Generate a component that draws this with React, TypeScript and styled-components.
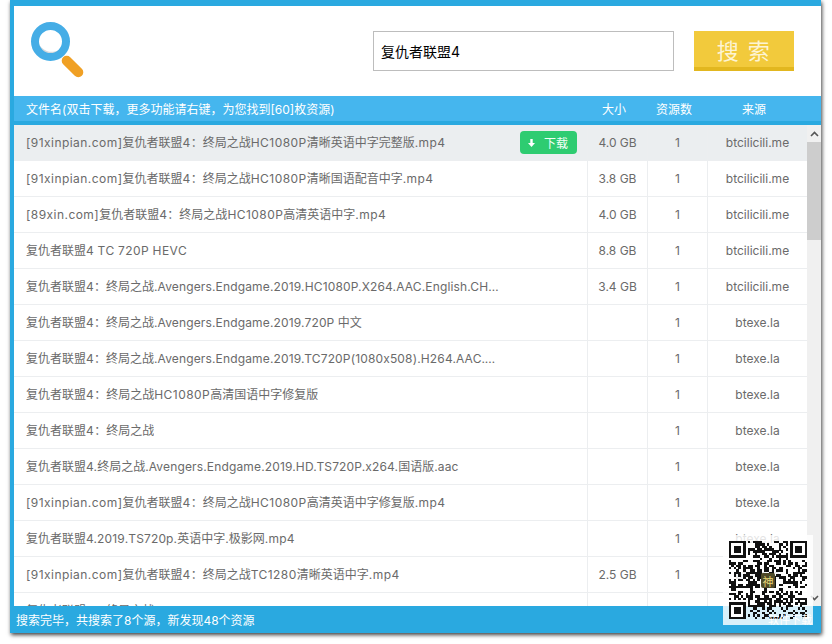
import React from 'react';
import styled, { createGlobalStyle } from 'styled-components';

const GlobalStyle = createGlobalStyle`
  html, body {
    margin: 0;
    padding: 0;
    background: #fff;
  }
  body {
    font-family: Inter, "Noto Sans CJK SC", sans-serif;
  }
`;

const Page = styled.div`
  width: 832px;
  height: 644px;
  padding: 0 10px 11px;
  box-sizing: border-box;
  overflow: hidden;
`;

const Win = styled.div`
  position: relative;
  width: 811px;
  height: 633px;
  box-sizing: border-box;
  display: flex;
  flex-direction: column;
  background: #fff;
  border-top: 6px solid #2aa9e0;
  border-left: 4px solid #2aa9e0;
  box-shadow: 1px 2px 4px rgba(0, 0, 0, 0.75);
`;

const Header = styled.div`
  height: 90px;
  box-sizing: border-box;
  flex: none;
  display: flex;
  align-items: flex-start;
  padding: 16px 27px 0 16px;
`;

const SearchInput = styled.input`
  width: 301px;
  height: 40px;
  box-sizing: border-box;
  margin: 9px 0 0 287px;
  padding: 0 7px;
  border: 1px solid #bdbdbd;
  outline: none;
  font-family: inherit;
  font-size: 14px;
  color: #000;
`;

const SearchButton = styled.button`
  width: 100px;
  height: 40px;
  box-sizing: border-box;
  margin: 9px 0 0 20px;
  padding: 0;
  border: 0;
  border-bottom: 4px solid #e2b71f;
  background: #f2ca3c;
  color: #fdf4d4;
  font-family: inherit;
  font-size: 22px;
  letter-spacing: 1.5px;
`;

const HeadRow = styled.div`
  height: 29px;
  box-sizing: border-box;
  flex: none;
  display: flex;
  align-items: center;
  padding-right: 17px;
  background: #45b6ee;
  border-bottom: 4px solid #2aa9e0;
  color: #fff;
  font-size: 12px;
`;

const HeadName = styled.div`
  flex: 1;
  padding-left: 12px;
`;

const HeadCell = styled.div<{ $w: number }>`
  width: ${p => p.$w}px;
  text-align: center;
`;

const Body = styled.div`
  flex: 1;
  min-height: 0;
  display: flex;
  overflow: hidden;
`;

const List = styled.div`
  flex: 1;
  min-width: 0;
`;

const Row = styled.div<{ $active?: boolean }>`
  height: 36px;
  box-sizing: border-box;
  display: flex;
  align-items: stretch;
  border-bottom: 1px solid #eceef0;
  background: ${p => (p.$active ? '#ebeef0' : '#fff')};
  color: #6a6a6a;
  font-size: 12px;
`;

const NameCell = styled.div`
  flex: 1;
  min-width: 0;
  display: flex;
  align-items: center;
  justify-content: space-between;
  padding: 0 10px 0 12px;
`;

const NameText = styled.span`
  max-width: 476px;
  padding-bottom: 2px;
  overflow: hidden;
  white-space: nowrap;
  text-overflow: ellipsis;
`;

const Latin = styled.span<{ $tight?: boolean }>`
  letter-spacing: ${p => (p.$tight ? '0.15px' : '0.45px')};
`;

const Cell = styled.div<{ $w: number }>`
  width: ${p => p.$w}px;
  flex: none;
  display: flex;
  align-items: center;
  justify-content: center;
  border-left: 1px solid #eceef0;
  box-sizing: border-box;
`;

const DownloadBtn = styled.span`
  flex: none;
  width: 57px;
  height: 23px;
  box-sizing: border-box;
  padding-left: 7px;
  display: flex;
  align-items: center;
  gap: 8px;
  border-radius: 4px;
  background: #2ecc71;
  color: #f2fff7;
  font-size: 12px;
`;

const Scrollbar = styled.div`
  width: 14px;
  flex: none;
  display: flex;
  flex-direction: column;
  background: #f0f0f0;
`;

const ScrollArrow = styled.div`
  height: 17px;
  flex: none;
  display: flex;
  align-items: center;
  justify-content: center;
`;

const ScrollTrack = styled.div`
  flex: 1;
`;

const ScrollThumb = styled.div`
  height: 98px;
  background: #cdcdcd;
`;

const Footer = styled.div`
  height: 27px;
  flex: none;
  margin-left: -4px;
  padding-left: 6px;
  display: flex;
  align-items: center;
  background: #2aa9e0;
  color: #fff;
  font-size: 12px;
`;

const QrBox = styled.div`
  position: absolute;
  right: 8px;
  bottom: 8px;
  width: 90px;
  height: 90px;
  display: flex;
  justify-content: center;
  padding-top: 6px;
  box-sizing: border-box;
  background: rgba(255, 255, 255, 0.82);

  svg {
    filter: blur(0.5px);
  }
`;

const QrBadge = styled.span`
  position: absolute;
  left: 38px;
  top: 38px;
  width: 14px;
  height: 15px;
  display: flex;
  align-items: center;
  justify-content: center;
  border-radius: 2px;
  background: #4e4a28;
  color: #e9d776;
  font-size: 11px;
`;

const QrCaption = styled.span`
  position: absolute;
  right: 1px;
  bottom: -1px;
  color: #fff;
  font-size: 11px;
  line-height: 12px;
`;

const Logo = () => (
  <svg width="56" height="64" viewBox="0 0 56 64">
    <circle cx="20.5" cy="19.5" r="12" fill="#fff" />
    <path d="M9 21a11.5 11.5 0 0 0 20 7a13 11 0 0 1-20-7z" fill="#d5d8db" />
    <circle cx="20.5" cy="19.5" r="15.5" fill="none" stroke="#45ade6" strokeWidth="8" />
    <path d="M36.7 38.7L48.3 50.3" fill="none" stroke="#f0a024" strokeWidth="10" strokeLinecap="round" />
  </svg>
);

const DownArrow = () => (
  <svg width="9" height="10" viewBox="0 0 9 10">
    <path d="M3.3 1h2.4v4h2.3L4.5 9 1 5h2.3z" fill="#fff" />
  </svg>
);

const Chevron = ({ up }: { up?: boolean }) => (
  <svg width="9" height="6" viewBox="0 0 9 6">
    <path d={up ? 'M1 5l3.5-3.5L8 5' : 'M1 1l3.5 3.5L8 1'} fill="none" stroke="#555" strokeWidth="1.6" />
  </svg>
);

const QR_SIZE = 33;

const isFinder = (x: number, y: number) =>
  (x < 8 && y < 8) || (x >= QR_SIZE - 8 && y < 8) || (x < 8 && y >= QR_SIZE - 8);

const QrCode = () => {
  const cells: React.ReactNode[] = [];
  let seed = 7319;
  for (let y = 0; y < QR_SIZE; y++) {
    for (let x = 0; x < QR_SIZE; x++) {
      seed = (seed * 1103515245 + 12345) & 0x7fffffff;
      if (isFinder(x, y) || ((seed >> 16) & 3) >= 2) continue;
      cells.push(<rect key={x + '-' + y} x={x} y={y} width="1.02" height="1.02" />);
    }
  }
  const finder = (x: number, y: number) => (
    <g key={x + '-' + y}>
      <rect x={x} y={y} width="7" height="7" />
      <rect x={x + 1} y={y + 1} width="5" height="5" fill="#fff" />
      <rect x={x + 2} y={y + 2} width="3" height="3" />
    </g>
  );
  return (
    <svg width="78" height="78" viewBox={`0 0 ${QR_SIZE} ${QR_SIZE}`} fill="#111" shapeRendering="crispEdges">
      {cells}
      {finder(0, 0)}
      {finder(QR_SIZE - 7, 0)}
      {finder(0, QR_SIZE - 7)}
    </svg>
  );
};

// latin runs sit wider than the CJK ones in the original font, dotted names less so
const spaced = (text: string, tight?: boolean) =>
  text.split(/([\x21-\x7e]+)/).map((part, i) =>
    i % 2 ? (
      <Latin key={i} $tight={tight}>
        {part}
      </Latin>
    ) : (
      part
    ),
  );

const rows = [
  { name: '[91xinpian.com]复仇者联盟4：终局之战HC1080P清晰英语中字完整版.mp4', size: '4.0 GB', src: 'btcilicili.me' },
  { name: '[91xinpian.com]复仇者联盟4：终局之战HC1080P清晰国语配音中字.mp4', size: '3.8 GB', src: 'btcilicili.me' },
  { name: '[89xin.com]复仇者联盟4：终局之战HC1080P高清英语中字.mp4', size: '4.0 GB', src: 'btcilicili.me' },
  { name: '复仇者联盟4 TC 720P HEVC', size: '8.8 GB', src: 'btcilicili.me' },
  { name: '复仇者联盟4：终局之战.Avengers.Endgame.2019.HC1080P.X264.AAC.English.CHS.mp4', size: '3.4 GB', src: 'btcilicili.me', tight: true },
  { name: '复仇者联盟4：终局之战.Avengers.Endgame.2019.720P 中文', size: '', src: 'btexe.la', tight: true },
  { name: '复仇者联盟4：终局之战.Avengers.Endgame.2019.TC720P(1080x508).H264.AAC.CHS.mp4', size: '', src: 'btexe.la', tight: true },
  { name: '复仇者联盟4：终局之战HC1080P高清国语中字修复版', size: '', src: 'btexe.la' },
  { name: '复仇者联盟4：终局之战', size: '', src: 'btexe.la' },
  { name: '复仇者联盟4.终局之战.Avengers.Endgame.2019.HD.TS720P.x264.国语版.aac', size: '', src: 'btexe.la', tight: true },
  { name: '[91xinpian.com]复仇者联盟4：终局之战HC1080P高清英语中字修复版.mp4', size: '', src: 'btexe.la' },
  { name: '复仇者联盟4.2019.TS720p.英语中字.极影网.mp4', size: '', src: 'btexe.la', tight: true },
  { name: '[91xinpian.com]复仇者联盟4：终局之战TC1280清晰英语中字.mp4', size: '2.5 GB', src: 'btexe.la' },
  { name: '复仇者联盟4：终局之战.mp4', size: '', src: 'btexe.la' },
];

export default function App() {
  return (
    <Page>
      <GlobalStyle />
      <Win>
        <Header>
          <Logo />
          <SearchInput defaultValue="复仇者联盟4" />
          <SearchButton>搜 索</SearchButton>
        </Header>
        <HeadRow>
          <HeadName>文件名(双击下载，更多功能请右键，为您找到[60]枚资源)</HeadName>
          <HeadCell $w={60}>大小</HeadCell>
          <HeadCell $w={60}>资源数</HeadCell>
          <HeadCell $w={100}>来源</HeadCell>
        </HeadRow>
        <Body>
          <List>
            {rows.map((r, i) => (
              <Row key={i} $active={i === 0}>
                <NameCell>
                  <NameText>{spaced(r.name, r.tight)}</NameText>
                  {i === 0 && (
                    <DownloadBtn>
                      <DownArrow />
                      下载
                    </DownloadBtn>
                  )}
                </NameCell>
                <Cell $w={60}>{r.size}</Cell>
                <Cell $w={60}>1</Cell>
                <Cell $w={100}>{r.src}</Cell>
              </Row>
            ))}
          </List>
          <Scrollbar>
            <ScrollArrow>
              <Chevron up />
            </ScrollArrow>
            <ScrollThumb />
            <ScrollTrack />
            <ScrollArrow>
              <Chevron />
            </ScrollArrow>
          </Scrollbar>
        </Body>
        <Footer>搜索完毕，共搜索了8个源，新发现48个资源</Footer>
        <QrBox>
          <QrCode />
          <QrBadge>神</QrBadge>
          <QrCaption>软件下载</QrCaption>
        </QrBox>
      </Win>
    </Page>
  );
}
